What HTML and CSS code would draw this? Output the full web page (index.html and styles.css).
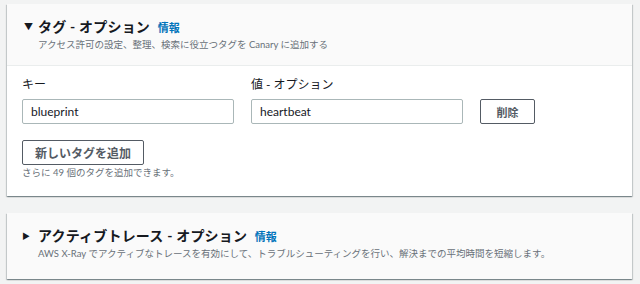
FILE: index.html
```html
<!DOCTYPE html>
<html lang="ja">
<head>
    <meta charset="UTF-8">
    <title>Canary タグ</title>
    <link rel="stylesheet" href="styles.css">
</head>
<body>

<div class="panel">
    <div class="panel-header">
        <h2 class="panel-title"><span class="caret">▼</span>タグ - オプション <a href="#" class="info">情報</a></h2>
        <p class="panel-desc">アクセス許可の設定、整理、検索に役立つタグを Canary に追加する</p>
    </div>
    <div class="panel-body">
        <div class="tag-row">
            <div class="field">
                <label class="field-label">キー</label>
                <input class="text-input" type="text" value="blueprint">
            </div>
            <div class="field">
                <label class="field-label">値 - オプション</label>
                <input class="text-input" type="text" value="heartbeat">
            </div>
            <button class="btn btn-remove">削除</button>
        </div>
        <button class="btn btn-add">新しいタグを追加</button>
        <p class="hint">さらに 49 個のタグを追加できます。</p>
    </div>
</div>

<div class="panel panel-collapsed">
    <div class="panel-header">
        <h2 class="panel-title"><span class="caret caret-right">▶</span>アクティブトレース - オプション <a href="#" class="info">情報</a></h2>
        <p class="panel-desc">AWS X-Ray でアクティブなトレースを有効にして、トラブルシューティングを行い、解決までの平均時間を短縮します。</p>
    </div>
</div>

</body>
</html>
```

FILE: styles.css
```css
body {
    margin: 0;
    padding: 4px 8px 0 7px;
    background-color: #f2f3f3;
    font-family: "Lato", "Noto Sans CJK JP", sans-serif;
    color: #16191f;
}

/* パネル */
.panel {
    width: 625px;
    background-color: #fff;
    box-shadow: 0 1px 1px 0 rgba(0, 28, 36, 0.3),
                1px 1px 1px 0 rgba(0, 28, 36, 0.15),
                -1px 1px 1px 0 rgba(0, 28, 36, 0.15);
    margin-bottom: 17px;
}

.panel-header {
    background-color: #fafafa;
    border-bottom: 1px solid #eaeded;
    padding: 14px 0 0 31px;
    height: 47px;
}

.panel-collapsed .panel-header {
    border-bottom: none;
    height: 52px;
}

.panel-title {
    position: relative;
    margin: 0;
    font-size: 14px;
    font-weight: bold;
    line-height: 18px;
    letter-spacing: 0.2px;
}

.caret {
    position: absolute;
    left: -14px;
    top: 0;
    font-size: 9px;
}

.caret-right {
    left: -16px;
    font-size: 8px;
}

.info {
    margin-left: 4px;
    font-size: 11px;
    letter-spacing: 0;
    color: #0073bb;
    text-decoration: none;
}

.panel-desc {
    margin: 1px 0 0 0;
    font-size: 9.5px;
    line-height: 14px;
    color: #687078;
}

/* タグ入力欄 */
.panel-body {
    padding: 11px 15px 0 15px;
    height: 119px;
}

.tag-row {
    display: flex;
    align-items: flex-end;
    gap: 17px;
}

.field {
    display: flex;
    flex-direction: column;
}

.field-label {
    font-size: 12px;
    line-height: 16px;
    margin-bottom: 6px;
}

.text-input {
    width: 212px;
    height: 25px;
    box-sizing: border-box;
    border: 1px solid #aab7b8;
    border-radius: 2px;
    padding: 0 8px;
    font-family: "Lato", "Noto Sans CJK JP", sans-serif;
    font-size: 12px;
    color: #16191f;
}

.btn {
    box-sizing: border-box;
    background-color: #fff;
    border: 1px solid #545b64;
    border-radius: 2px;
    font-family: "Lato", "Noto Sans CJK JP", sans-serif;
    font-weight: bold;
    font-size: 11px;
    color: #545b64;
}

.btn-remove {
    width: 55px;
    height: 25px;
}

.btn-add {
    margin-top: 16px;
    width: 122px;
    height: 25px;
    font-size: 12px;
}

.hint {
    margin: 1px 0 0 0;
    font-size: 9.5px;
    line-height: 14px;
    color: #687078;
}
```
